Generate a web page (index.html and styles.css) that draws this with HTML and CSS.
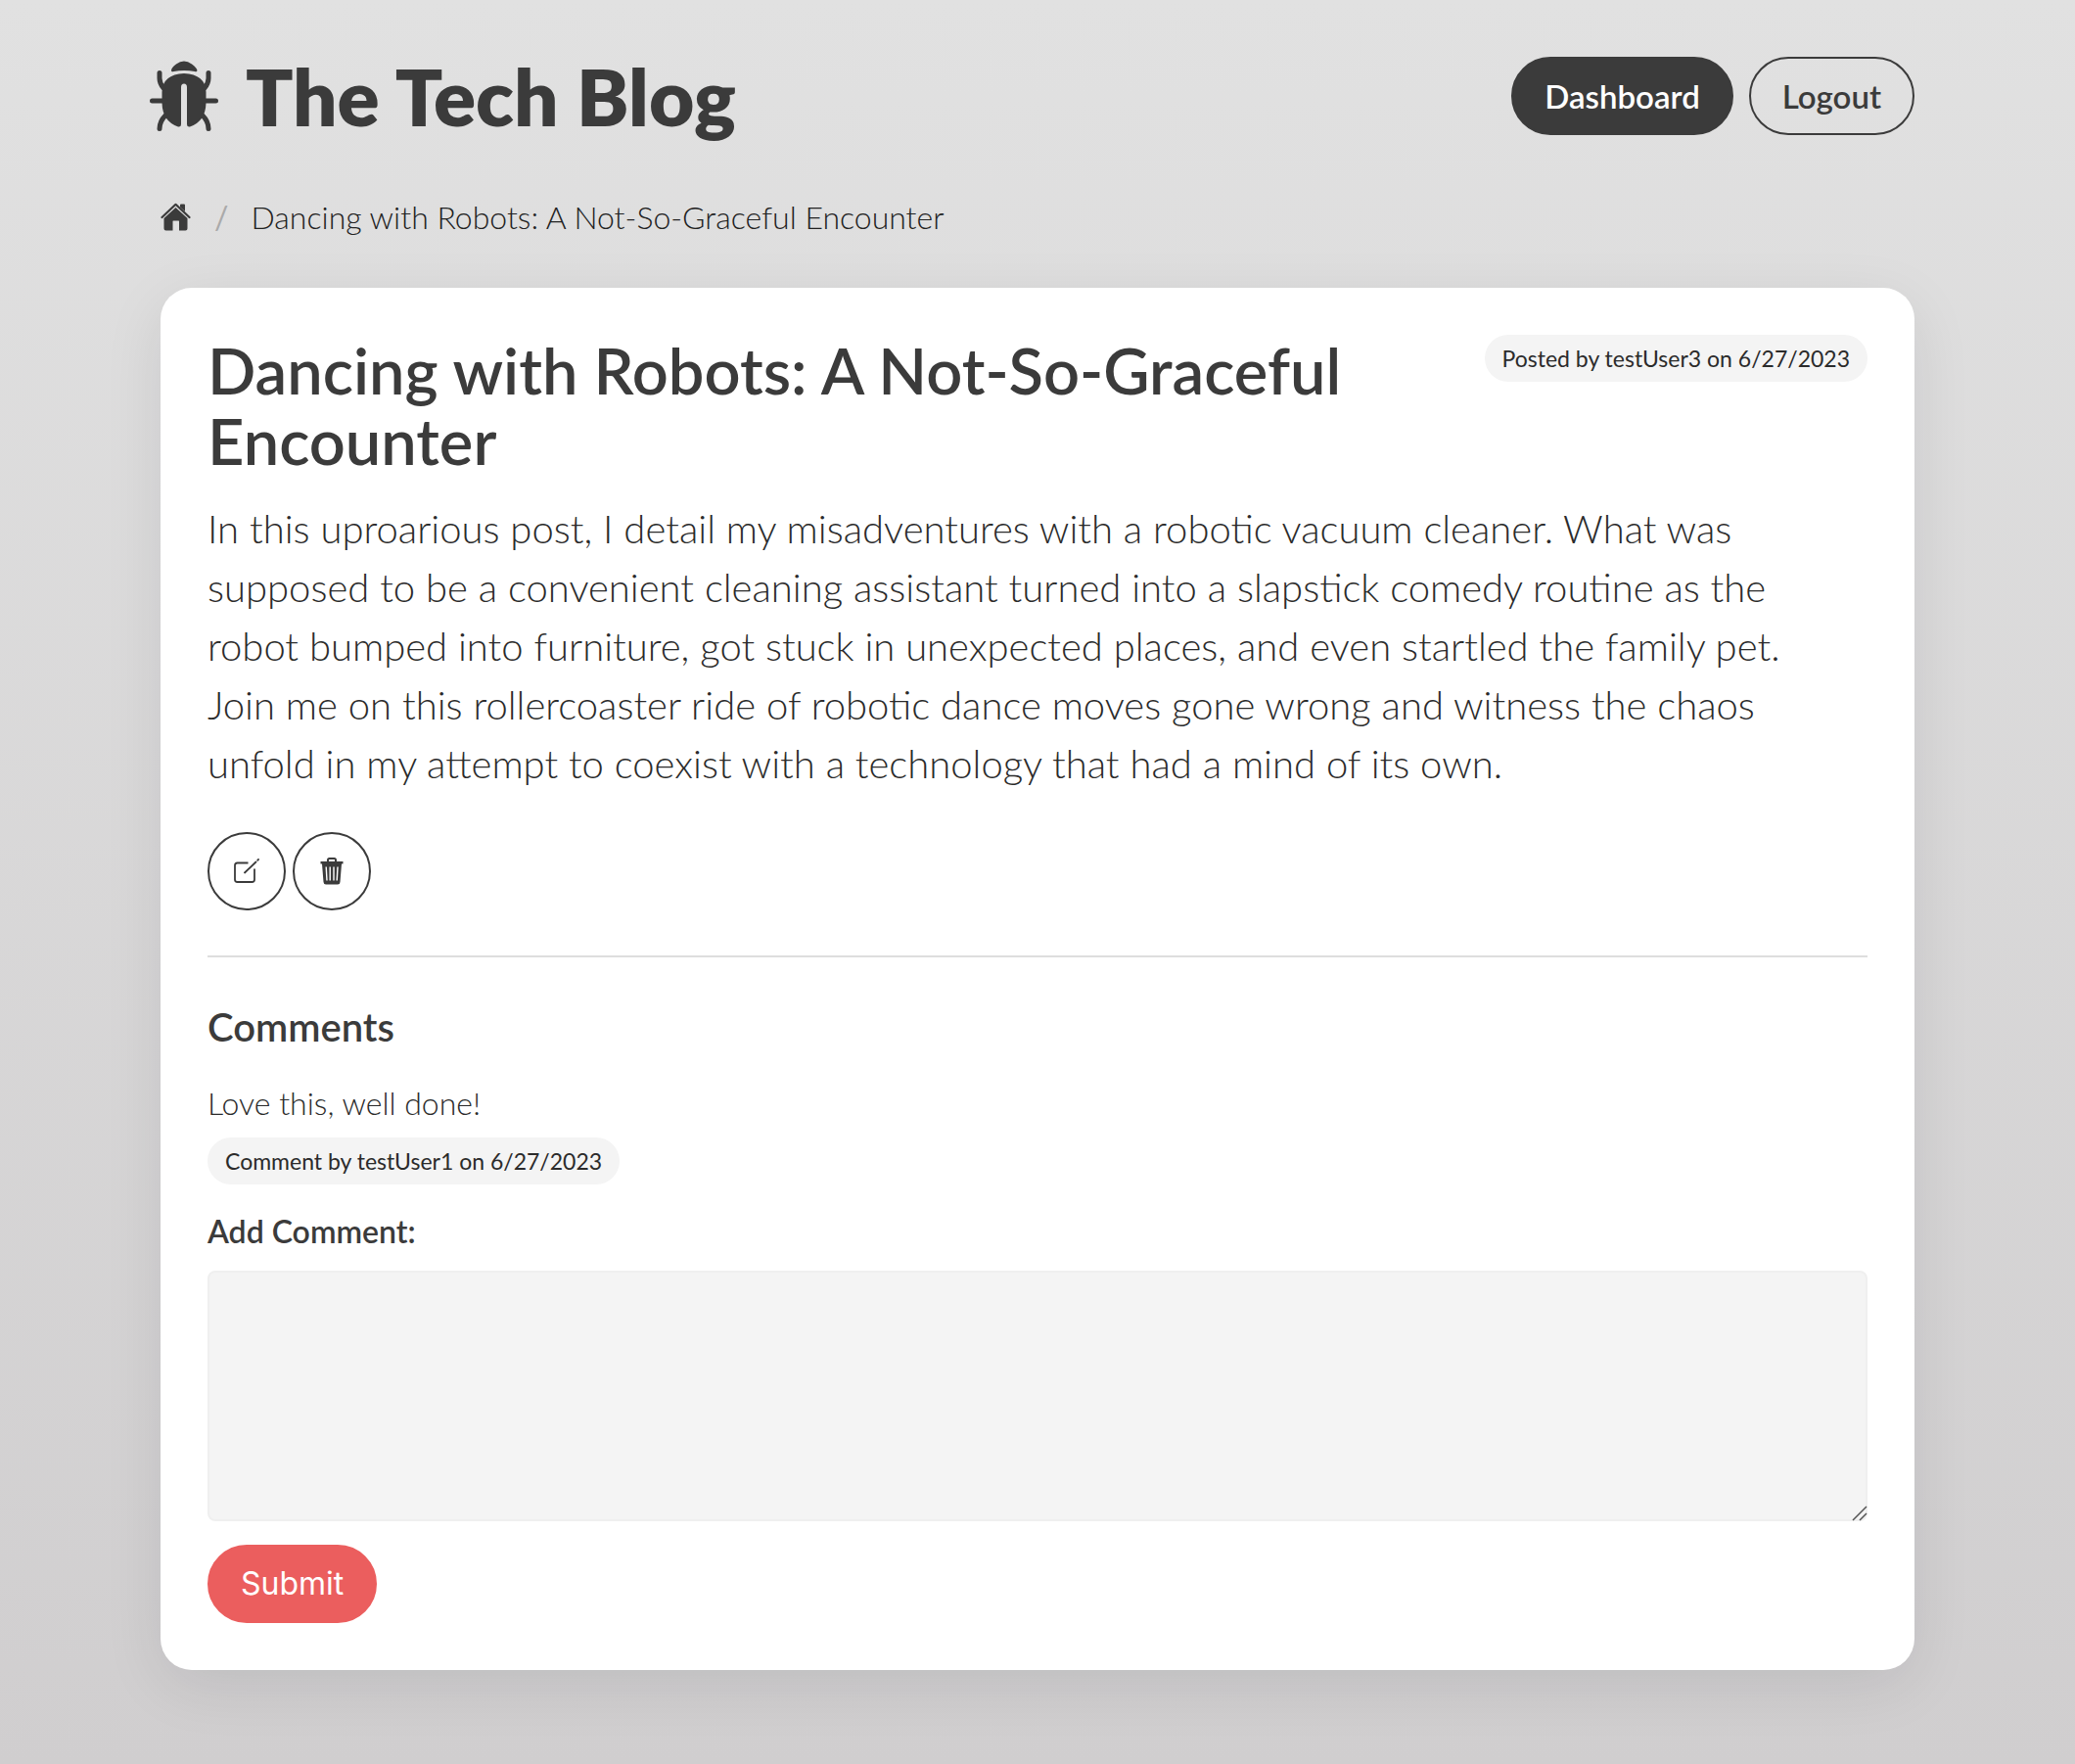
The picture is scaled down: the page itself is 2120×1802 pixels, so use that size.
FILE: index.html
```html
<!DOCTYPE html>
<html lang="en">
<head>
<meta charset="utf-8">
<meta name="viewport" content="width=device-width, initial-scale=1">
<title>The Tech Blog</title>
<link rel="stylesheet" href="styles.css">
</head>
<body>
<div class="container">
  <header class="site-header">
    <a class="brand" href="#">
      <svg class="brand-icon" viewBox="0 0 70 72" aria-hidden="true">
        <path d="M22 10Q22 7 27 3.500Q35-2.500 43 3.500Q48 7 48.500 10Q48 12 46 11Q35 9 24.500 11Q22 12 22 10Z" fill="currentColor"/>
        <path d="M12.500 32Q13 14 35 13Q57 14 57.500 32V43Q57 62 41 67.500Q38 68 38 65V27Q38 23.500 35 23.500Q32 23.500 32 27V65Q32 68 29 67.500Q13 62 12.500 43Z" fill="currentColor"/>
        <path d="M10 12.500V18Q10 23 14 28M60 12.500V18Q60 23 56 28M2.500 41H16M54 41H67.500M16 56Q10 62 10 69.500M54 56Q60 62 60 69.500" fill="none" stroke="currentColor" stroke-width="5" stroke-linecap="round"/>
      </svg>
      <h1 class="brand-name">The Tech Blog</h1>
    </a>
    <nav class="actions" aria-label="Account">
      <a class="button button-dark" href="#">Dashboard</a>
      <a class="button button-outline" href="#">Logout</a>
    </nav>
  </header>

  <nav class="breadcrumb" aria-label="Breadcrumb">
    <a class="home" href="#" aria-label="Home">
      <svg class="home-icon" viewBox="0 0 32 30" aria-hidden="true">
        <path d="M1.500 15 15.500 1.800 29.500 15" fill="none" stroke="currentColor" stroke-width="2.200" stroke-linecap="round" stroke-linejoin="round"/>
        <path d="M20 2.500Q20 1.500 21 1.500H24Q25 1.500 25 2.500V9L20 4.500ZM15.500 5 27.500 16V26.500Q27.500 28.500 25.500 28.500H19V19Q19 18.500 18.500 18.500H13Q12.500 18.500 12.500 19V28.500H5.500Q3.500 28.500 3.500 26.500V16Z" fill="currentColor"/>
      </svg>
    </a>
    <span class="separator" aria-hidden="true">/</span>
    <a class="crumb" href="#" aria-current="page">Dancing with Robots: A Not-So-Graceful Encounter</a>
  </nav>

  <main class="card">
    <article>
      <div class="post-header">
        <h2 class="post-title">Dancing with Robots: A Not-So-Graceful Encounter</h2>
        <span class="tag">Posted by testUser3 on 6/27/2023</span>
      </div>
      <p class="post-body">In this uproarious post, I detail my misadventures with a robotic vacuum cleaner. What was supposed to be a convenient cleaning assistant turned into a slapstick comedy routine as the robot bumped into furniture, got stuck in unexpected places, and even startled the family pet. Join me on this rollercoaster ride of robotic dance moves gone wrong and witness the chaos unfold in my attempt to coexist with a technology that had a mind of its own.</p>
      <div class="post-actions">
        <button class="icon-button" type="button" aria-label="Edit post">
          <svg class="action-icon" viewBox="0 0 28 28" aria-hidden="true">
            <path d="M15.500 5.500H4.500Q2 5.500 2 8V22.500Q2 25 4.500 25H19.500Q22 25 22 22.500V11.500" fill="none" stroke="currentColor" stroke-width="1.800"/>
            <path d="M12 15.500 23.500 4.500M25.200 2.800 26 2" fill="none" stroke="currentColor" stroke-width="1.800" stroke-linecap="round"/>
          </svg>
        </button>
        <button class="icon-button" type="button" aria-label="Delete post">
          <svg class="action-icon" viewBox="0 0 28 28" aria-hidden="true">
            <path d="M10 4.500V2.500Q10 1 11.500 1H16.500Q18 1 18 2.500V4.500" fill="none" stroke="currentColor" stroke-width="2"/>
            <path d="M2.500 4H25.500V6.500H24L22.500 25Q22.300 27.500 20 27.500H8Q5.700 27.500 5.500 25L4 6.500H2.500Z" fill="currentColor"/>
            <path d="M8.200 9.500 9 23.500M12.200 9.500V23.500M16 9.500V23.500M20 9.500 19.200 23.500" fill="none" stroke="#fff" stroke-width="1.400"/>
          </svg>
        </button>
      </div>
    </article>

    <hr class="divider">

    <section>
      <h3 class="comments-title">Comments</h3>
      <p class="comment-text">Love this, well done!</p>
      <span class="tag">Comment by testUser1 on 6/27/2023</span>
      <form class="comment-form">
        <label class="label" for="comment">Add Comment:</label>
        <div class="field">
          <textarea class="textarea" id="comment" name="comment"></textarea>
          <svg class="grip" viewBox="0 0 16 16" aria-hidden="true"><path d="M1 15 15 1M8 15 15 8" stroke="#555" stroke-width="1.500" fill="none"/></svg>
        </div>
        <button class="button button-submit" type="submit">Submit</button>
      </form>
    </section>
  </main>
</div>
</body>
</html>
```
FILE: styles.css
```css
* {
  box-sizing: border-box;
  margin: 0;
  padding: 0;
}

body {
  min-height: 100vh;
  background: linear-gradient(#e1e1e1, #d0cecf);
  color: #3b3b3b;
  font: 300 32px/48px Lato, "Open Sans", sans-serif;
}

a {
  color: inherit;
  text-decoration: none;
}

svg {
  display: block;
}

.container {
  max-width: 1920px;
  margin: 0 auto;
  padding: 48px 64px 96px;
}

.site-header {
  display: flex;
  align-items: center;
  justify-content: space-between;
  min-height: 100px;
}

.brand {
  display: flex;
  align-items: center;
  gap: 28px;
  margin-left: -11px;
}

.brand-icon {
  width: 70px;
  height: 72px;
}

.brand-name {
  font-size: 80px;
  line-height: 100px;
  font-weight: 800;
}

.actions {
  display: flex;
  gap: 16px;
}

.button {
  display: inline-flex;
  align-items: center;
  justify-content: center;
  height: 80px;
  padding: 0 32px;
  border: 2px solid #3b3b3b;
  border-radius: 40px;
  font: 600 33px/48px Lato, "Open Sans", sans-serif;
}

.button-dark {
  background: #3b3b3b;
  color: #fff;
}

.button-outline {
  background: transparent;
}

.button-submit {
  border-color: #eb5e5e;
  background: #eb5e5e;
  color: #fff;
  font-family: Inter, sans-serif;
  font-size: 32px;
  font-weight: 400;
}

.breadcrumb {
  display: flex;
  align-items: center;
  gap: 23px;
  margin: 50px 0 48px;
}

.home-icon {
  width: 32px;
  height: 30px;
}

.separator {
  color: #aaa;
  font-weight: 400;
}

.crumb {
  color: #222;
}

.card {
  padding: 48px;
  border-radius: 32px;
  background: #fff;
  box-shadow: 0 16px 64px -4px rgba(10, 20, 30, 0.1);
}

.post-header {
  display: flex;
  align-items: flex-start;
  justify-content: space-between;
  gap: 48px;
}

.post-title {
  font-size: 65px;
  line-height: 72px;
  font-weight: 600;
}

.tag {
  display: inline-flex;
  flex: none;
  align-items: center;
  height: 48px;
  padding: 0 18px;
  border-radius: 24px;
  background: #f4f4f4;
  color: #2b2b2b;
  font-size: 23px;
  font-weight: 400;
}

.post-body {
  margin: 24px 0 40px;
  padding-right: 48px;
  color: #2b2b2b;
  font-size: 40px;
  line-height: 60px;
}

.post-actions {
  display: flex;
  gap: 7px;
}

.icon-button {
  display: grid;
  place-items: center;
  width: 80px;
  height: 80px;
  border: 2px solid #3b3b3b;
  border-radius: 50%;
  background: #fff;
  color: #3b3b3b;
}

.action-icon {
  width: 28px;
  height: 28px;
}

.divider {
  height: 2px;
  margin: 46px 0 47px;
  border: 0;
  background: #dedede;
}

.comments-title {
  margin-bottom: 30px;
  font-size: 40px;
  font-weight: 600;
}

.comment-text {
  margin-bottom: 8px;
  color: #2b2b2b;
}

.comment-form {
  margin-top: 24px;
}

.label {
  display: block;
  margin-bottom: 16px;
  font-weight: 600;
}

.field {
  position: relative;
  margin-bottom: 24px;
}

.textarea {
  display: block;
  width: 100%;
  height: 256px;
  padding: 16px;
  border: 2px solid #efefef;
  border-radius: 8px;
  background: #f4f4f4;
  font: inherit;
  resize: none;
}

.grip {
  position: absolute;
  right: 0;
  bottom: 0;
  width: 16px;
  height: 16px;
  pointer-events: none;
}
```
